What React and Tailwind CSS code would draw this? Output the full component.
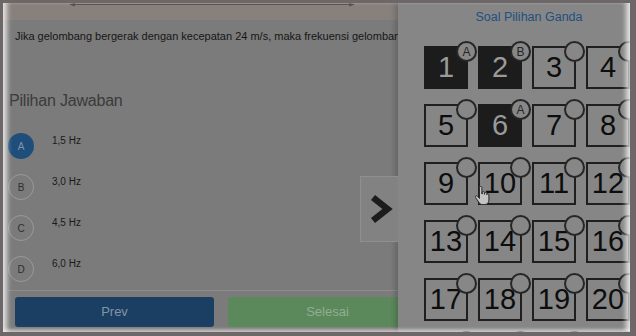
import React from 'react';

const options = [
  { key: 'A', text: '1,5 Hz', active: true },
  { key: 'B', text: '3,0 Hz' },
  { key: 'C', text: '4,5 Hz' },
  { key: 'D', text: '6,0 Hz' },
];

// jawaban yang sudah dipilih per nomor soal
const answers = { 1: 'A', 2: 'B', 6: 'A' };
const numbers = Array.from({ length: 24 }, (_, i) => i + 1);

function NumberBox({ n, answer }) {
  const done = Boolean(answer);
  return (
    <div className="relative h-[43px] w-[44px]">
      <div
        className={
          done
            ? 'flex h-full w-full items-center justify-center bg-[#1c1c1c] text-[#9a9a9a]'
            : 'flex h-full w-full items-center justify-center border-2 border-[#1f1f1f] text-[#0d0d0d]'
        }
      >
        <span className="text-[29px] leading-none">{n}</span>
      </div>
      <div className="absolute -top-[5px] left-[32px] flex h-[21px] w-[21px] items-center justify-center rounded-full border-2 border-[#262626] bg-[#878787] text-[12px] leading-none text-[#262626]">
        {answer}
      </div>
    </div>
  );
}

function HandCursor() {
  return (
    <svg width="16" height="20" viewBox="0 0 16 20" className="absolute left-[76px] top-[140px]">
      <path
        d="M5.5 1.6c0-.8.6-1.3 1.2-1.3s1.2.5 1.2 1.3V8h.3V6.6c0-.7.5-1.1 1.1-1.1s1.1.4 1.1 1.1v1.7h.2V7.4c0-.7.5-1.1 1.1-1.1s1.1.4 1.1 1.1v1.3h.1c0-.6.5-1 1-1s1 .4 1 1V14c0 2.5-1.6 4.5-4 4.5H8.6c-1.8 0-2.8-.8-3.8-2.2L1.6 11.5c-.4-.6-.2-1.3.4-1.6.5-.3 1.2-.1 1.6.4l1.9 2.2V1.6z"
        fill="#c4c4c4"
        stroke="#2a2a2a"
        strokeWidth="1"
      />
    </svg>
  );
}

export default function App() {
  return (
    <div
      className="h-[336px] w-[636px] bg-[#6e6767] pl-[3px] pt-[3px]"
      style={{ fontFamily: '"Liberation Sans", Arial, sans-serif' }}
    >
      <div className="relative h-[329px] w-[627px] overflow-hidden bg-[#7b7b7b]">
        {/* halaman soal */}
        <div className="flex flex-col">
          <div className="relative h-[17px] bg-[#88807c]">
            <svg width="300" height="6" className="absolute left-[64px] top-0">
              <line x1="6" y1="1.5" x2="284" y2="1.5" stroke="#554b47" strokeWidth="1.2" />
              <polygon points="2,1.5 8,0 8,3.5" fill="#554b47" />
              <polygon points="288,1.5 282,0 282,3.5" fill="#554b47" />
            </svg>
          </div>
          <p className="mt-[9px] whitespace-nowrap pl-[12px] text-[11px] leading-[14px] text-[#161616]">
            Jika gelombang bergerak dengan kecepatan 24 m/s, maka frekuensi gelombang tersebut adalah ....
          </p>
          <h2 className="mt-[48px] pl-[6px] text-[16px] leading-[20px] tracking-[-0.2px] text-[#3a3a3a]">Pilihan Jawaban</h2>

          <div className="mt-[22px] flex flex-col gap-[15px] pl-[5px]">
            {options.map((opt) => (
              <div key={opt.key} className="flex items-start">
                <div
                  className={
                    opt.active
                      ? 'flex h-[26px] w-[26px] items-center justify-center rounded-full bg-[#1f4e7b] text-[10px] text-[#8094ab]'
                      : 'flex h-[26px] w-[26px] items-center justify-center rounded-full border border-[#9a9a9a] text-[10px] text-[#2e2e2e]'
                  }
                >
                  {opt.key}
                </div>
                <span className="ml-[18px] mt-[2px] text-[10px] leading-[12px] text-[#1a1a1a]">{opt.text}</span>
              </div>
            ))}
          </div>

          <div className="ml-[5px] mt-[8px] h-px bg-[#8c8c8c]" />

          <div className="mt-[6px] flex gap-[14px] pl-[12px]">
            <button className="flex h-[30px] w-[199px] items-center justify-center rounded-[3px] bg-[#1b3f62] text-[13px] text-[#8193a8]">
              Prev
            </button>
            <button className="flex h-[30px] w-[199px] items-center justify-center rounded-[3px] bg-[#5b895b] text-[13px] text-[#93ad93]">
              Selesai
            </button>
          </div>
        </div>

        {/* panel nomor soal */}
        <div className="absolute left-[395px] top-0 h-full w-[262px] bg-[#868686] pt-[7px] shadow-[-3px_0_5px_rgba(0,0,0,0.18)]">
          <button className="absolute -left-[38px] top-[173px] flex h-[66px] w-[38px] items-center justify-center border border-r-0 border-[#8f8f8f] bg-[#828282]">
            <svg width="24" height="30" viewBox="0 0 24 30" className="ml-[2px]">
              <polyline points="4,3.5 18.5,15 4,26.5" fill="none" stroke="#1c1c1c" strokeWidth="6.5" />
            </svg>
          </button>
          <div className="h-[15px] text-center text-[12.5px] leading-[15px] text-[#22507f]">Soal Pilihan Ganda</div>
          <div className="relative mt-[21px] grid grid-cols-[repeat(4,44px)] gap-x-[10px] gap-y-[15px] pl-[26px]">
            {numbers.map((n) => (
              <NumberBox key={n} n={n} answer={answers[n]} />
            ))}
            <HandCursor />
          </div>
        </div>

        {/* bingkai terang di tepi */}
        <div className="pointer-events-none absolute inset-0 shadow-[inset_7px_0_5px_-3px_rgba(255,255,255,0.75),inset_-7px_0_5px_-3px_rgba(255,255,255,0.75),inset_0_-4px_3px_-1px_rgba(255,255,255,0.45)]" />
      </div>
    </div>
  );
}
